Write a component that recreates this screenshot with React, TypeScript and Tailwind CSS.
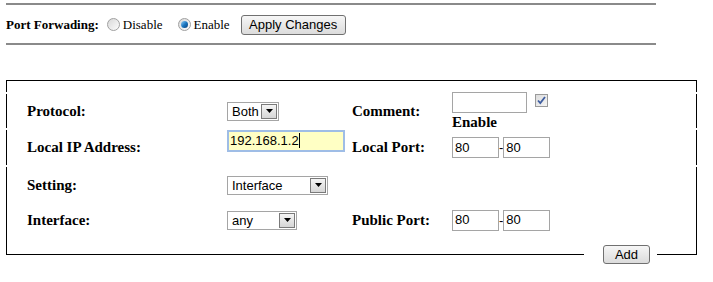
import React from 'react';

const serif = { fontFamily: '"Liberation Serif", "Times New Roman", serif' };
const sans = { fontFamily: '"Liberation Sans", Arial, sans-serif' };

const Radio: React.FC<{ checked?: boolean }> = ({ checked }) => (
    <span className="w-[13px] h-[13px] rounded-full border border-[#a0a0a0] bg-gradient-to-br from-[#d8d8d8] to-[#fdfdfd] flex items-center justify-center shrink-0">
        {checked && <span className="w-[7px] h-[7px] rounded-full bg-gradient-to-br from-[#8fd0f5] via-[#1a78c2] to-[#0c3f78]" />}
    </span>
);

const Select: React.FC<{ value: string; width: string }> = ({ value, width }) => (
    <div className={`${width} h-[19px] border border-[#a5a5a5] bg-white flex items-center justify-between pl-[4px] pr-[1px] text-[13px] text-black`} style={sans}>
        <span className="leading-none">{value}</span>
        <span className="w-[16px] h-[15px] border border-[#7a7a7a] bg-gradient-to-b from-[#f4f4f4] to-[#d6d6d6] flex items-center justify-center">
            <svg width="7" height="4" viewBox="0 0 7 4"><path d="M0 0h7L3.5 4z" fill="#000" /></svg>
        </span>
    </div>
);

const TextBox: React.FC<{ value?: string; width: string }> = ({ value, width }) => (
    <div className={`${width} h-[21px] border border-[#a5a5a5] bg-white flex items-center pl-[2px] text-[13px] text-black`} style={sans}>
        {value}
    </div>
);

const Label: React.FC<{ children: React.ReactNode }> = ({ children }) => (
    <span className="block text-[15px] font-bold text-black leading-none" style={serif}>{children}</span>
);

const PortRange: React.FC = () => (
    <div className="flex items-center">
        <TextBox value="80" width="w-[47px]" />
        <span className="text-[13px] leading-none" style={sans}>-</span>
        <TextBox value="80" width="w-[47px]" />
    </div>
);

export default function App() {
    return (
        <div className="w-[713px] h-[282px] bg-white pl-[6px] pt-[3px] overflow-hidden">
            <div className="w-[650px] h-[2px] bg-[#8a8a8a]" />
            <div className="flex items-center h-[38px] pt-[1px]">
                <span className="text-[13px] font-bold text-black" style={serif}>Port Forwading:</span>
                <span className="ml-[8px]"><Radio /></span>
                <span className="ml-[3px] text-[13px] text-black" style={serif}>Disable</span>
                <span className="ml-[15px]"><Radio checked /></span>
                <span className="ml-[3px] text-[13px] text-black" style={serif}>Enable</span>
                <button className="ml-[11px] w-[105px] h-[20px] rounded-[3px] border border-[#707070] bg-gradient-to-b from-[#f6f6f6] to-[#dcdcdc] text-[13px] text-black leading-none" style={sans}>
                    Apply Changes
                </button>
            </div>
            <div className="w-[650px] h-[2px] bg-[#8a8a8a]" />

            <div className="relative mt-[35px] w-[691px]">
                <div className="h-[12px] border-t border-x border-black" />
                <div className="mt-[2px] border-x border-black">
                    <div className="grid grid-cols-[200px_125px_100px_1fr] grid-rows-[34px] items-center pl-[20px]">
                        <Label>Protocol:</Label>
                        <Select value="Both" width="w-[52px]" />
                        <Label>Comment:</Label>
                        <div className="h-[38px] flex flex-col items-start">
                            <div className="flex items-start">
                                <TextBox width="w-[75px]" />
                                <span className="ml-[8px] mt-[2px] w-[13px] h-[13px] border border-[#9a9a9a] bg-gradient-to-br from-[#dcdcdc] to-[#f5f5f5] flex items-center justify-center">
                                    <svg width="9" height="9" viewBox="0 0 9 9"><path d="M1 4.5 3.3 7 8 1" stroke="#3e5da0" strokeWidth="1.8" fill="none" /></svg>
                                </span>
                            </div>
                            <span className="mt-[2px]"><Label>Enable</Label></span>
                        </div>
                    </div>
                </div>
                <div className="mt-[2px] border-x border-black">
                    <div className="grid grid-cols-[200px_125px_100px_1fr] grid-rows-[35px] items-center pl-[20px]">
                        <Label>Local IP Address:</Label>
                        <div className="w-[118px] h-[22px] -mt-[14px] border-2 border-[#9fbde6] bg-[#ffffc4] flex items-center pl-[1px] text-[13px] text-black" style={sans}>
                            192.168.1.2<span className="w-[1px] h-[15px] bg-black" />
                        </div>
                        <Label>Local Port:</Label>
                        <PortRange />
                    </div>
                </div>
                <div className="mt-[2px] border-x border-b border-black pb-[17px]">
                    <div className="grid grid-cols-[200px_125px_100px_1fr] grid-rows-[36px_34px] items-center pl-[20px]">
                        <Label>Setting:</Label>
                        <Select value="Interface" width="w-[101px]" />
                        <span />
                        <span />
                        <Label>Interface:</Label>
                        <Select value="any" width="w-[70px]" />
                        <Label>Public Port:</Label>
                        <PortRange />
                    </div>
                </div>
                <div className="absolute left-[578px] bottom-[-10px] bg-white pl-[19px] pr-[7px]">
                    <button className="w-[47px] h-[19px] rounded-[3px] border border-[#707070] bg-gradient-to-b from-[#f6f6f6] to-[#dcdcdc] text-[13px] text-black leading-none" style={sans}>
                        Add
                    </button>
                </div>
            </div>
        </div>
    );
}
